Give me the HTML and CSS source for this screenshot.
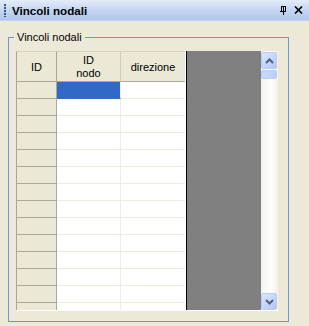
FILE: index.html
```html
<!DOCTYPE html>
<html lang="it">
<head>
  <meta charset="UTF-8">
  <title>Vincoli nodali</title>
  <link rel="stylesheet" href="styles.css">
</head>
<body>
  <div class="panel">
    <!-- Barra titolo -->
    <div class="titlebar">
      <span class="grip"></span>
      <span class="title">Vincoli nodali</span>
      <span class="tools">
        <svg width="8" height="10" viewBox="0 0 8 10">
          <path d="M2 1h4v5H2zM1 6h6M4 6v4" fill="none" stroke="#000" stroke-width="1" shape-rendering="crispEdges"/>
          <path d="M4.5 1v5" stroke="#000" stroke-width="1" shape-rendering="crispEdges"/>
        </svg>
        <svg width="9" height="8" viewBox="0 0 9 8">
          <path d="M1 0.5l7 7M8 0.5l-7 7" stroke="#000" stroke-width="1.6"/>
        </svg>
      </span>
    </div>

    <fieldset class="group">
      <legend>Vincoli nodali</legend>
      <div class="grid">
        <div class="table">
          <div class="row head">
            <div class="cell hdr c1">ID</div>
            <div class="cell hdr c2">ID<br>nodo</div>
            <div class="cell hdr c3">direzione</div>
          </div>
          <div class="row"><div class="cell rh c1"></div><div class="cell c2 sel"></div><div class="cell c3"></div></div>
          <div class="row"><div class="cell rh c1"></div><div class="cell c2"></div><div class="cell c3"></div></div>
          <div class="row"><div class="cell rh c1"></div><div class="cell c2"></div><div class="cell c3"></div></div>
          <div class="row"><div class="cell rh c1"></div><div class="cell c2"></div><div class="cell c3"></div></div>
          <div class="row"><div class="cell rh c1"></div><div class="cell c2"></div><div class="cell c3"></div></div>
          <div class="row"><div class="cell rh c1"></div><div class="cell c2"></div><div class="cell c3"></div></div>
          <div class="row"><div class="cell rh c1"></div><div class="cell c2"></div><div class="cell c3"></div></div>
          <div class="row"><div class="cell rh c1"></div><div class="cell c2"></div><div class="cell c3"></div></div>
          <div class="row"><div class="cell rh c1"></div><div class="cell c2"></div><div class="cell c3"></div></div>
          <div class="row"><div class="cell rh c1"></div><div class="cell c2"></div><div class="cell c3"></div></div>
          <div class="row"><div class="cell rh c1"></div><div class="cell c2"></div><div class="cell c3"></div></div>
          <div class="row"><div class="cell rh c1"></div><div class="cell c2"></div><div class="cell c3"></div></div>
          <div class="row"><div class="cell rh c1"></div><div class="cell c2"></div><div class="cell c3"></div></div>
          <div class="row"><div class="cell rh c1"></div><div class="cell c2"></div><div class="cell c3"></div></div>
        </div>
        <div class="empty"></div>
        <div class="vscroll">
          <div class="sbtn">
            <svg width="9" height="6" viewBox="0 0 9 6"><path d="M1 5l3.5-3.5L8 5" fill="none" stroke="#4d6185" stroke-width="2"/></svg>
          </div>
          <div class="thumb"></div>
          <div class="track"></div>
          <div class="sbtn">
            <svg width="9" height="6" viewBox="0 0 9 6"><path d="M1 1l3.5 3.5L8 1" fill="none" stroke="#4d6185" stroke-width="2"/></svg>
          </div>
        </div>
      </div>
    </fieldset>
  </div>
</body>
</html>
```

FILE: styles.css
```css
body {
  margin: 0;
  padding: 0;
  font-family: "Liberation Sans", Arial, sans-serif;
  font-size: 11px;
  color: #000;
  background: #ece9d8;
}

.panel {
  width: 309px;
  height: 326px;
  background: #ece9d8;
  overflow: hidden;
}

.titlebar {
  height: 21px;
  display: flex;
  align-items: center;
  background: linear-gradient(180deg, #e4ecf9 0%, #c8d8f3 45%, #aec6ec 100%);
  border-bottom: 1px solid #c5d3ea;
  box-sizing: border-box;
}

.grip {
  width: 2px;
  height: 13px;
  margin: 1px 6px 0 4px;
  background: repeating-linear-gradient(180deg, #31528f 0 2px, transparent 2px 3px);
}

.title {
  font-weight: bold;
  font-size: 11.6px;
  flex: 1;
  padding-top: 1px;
}

.tools {
  display: flex;
  align-items: center;
  gap: 7px;
  margin-right: 6px;
}

.group {
  margin: 10px 0 0 8px;
  padding: 0 10px 10px 7px;
  width: 262px;
  border: 1px solid #6a97dd;
  min-width: 0;
}

.group legend {
  padding: 0 3px;
  margin-left: -2px;
  line-height: 13px;
  font-size: 11px;
}

.grid {
  display: flex;
  height: 260px;
  background: #fff;
  border-bottom: 1px solid #fff;
  box-sizing: border-box;
  margin-top: 7px;
}

.table {
  width: 170px;
  border-right: 1px solid #000;
  overflow: hidden;
  flex: none;
}

.row {
  display: flex;
  height: 17px;
}

.row.head {
  height: 31px;
}

.cell {
  box-sizing: border-box;
  border-bottom: 1px solid #efebde;
  border-right: 1px solid #efebde;
  background: #fff;
}

.c1 { width: 41px; }
.c2 { width: 64px; }
.c3 { width: 64px; border-right: none; }

.hdr {
  background: #ebe8d6;
  border-top: 1px solid #d8d4c2;
  border-right: 1px solid #d0ccb8;
  border-bottom: 1px solid #aca899;
  display: flex;
  align-items: center;
  justify-content: center;
  text-align: center;
  line-height: 13px;
  padding-top: 1px;
}

.hdr.c1 {
  border-left: 1px solid #aca899;
  border-right: 1px solid #aca899;
}

.hdr.c3 {
  border-right: none;
}

.rh {
  background: #ebe8d6;
  border-left: 1px solid #aca899;
  border-right: 1px solid #aca899;
  border-bottom: 1px solid #aca899;
}

.sel {
  background: #316ac5;
  border-bottom-color: #316ac5;
}

.empty {
  width: 74px;
  background: #808080;
  flex: none;
}

.vscroll {
  width: 17px;
  display: flex;
  flex-direction: column;
  background: linear-gradient(90deg, #f4f3ee 0%, #fefefb 60%, #f3f1ea 100%);
  padding-top: 1px;
  box-sizing: border-box;
}

.sbtn {
  height: 15px;
  margin: 0 1px 0 0;
  border: 1px solid #b7cbf5;
  border-radius: 2px;
  background: linear-gradient(135deg, #dde7fd 0%, #c2d3fb 60%, #b2c6f4 100%);
  display: flex;
  align-items: center;
  justify-content: center;
}

.thumb {
  height: 7px;
  margin: 1px 1px 0 0;
  border: 1px solid #b7cbf5;
  border-radius: 2px;
  background: linear-gradient(90deg, #c9d8fb, #bccff9);
}

.track {
  flex: 1;
}
```
